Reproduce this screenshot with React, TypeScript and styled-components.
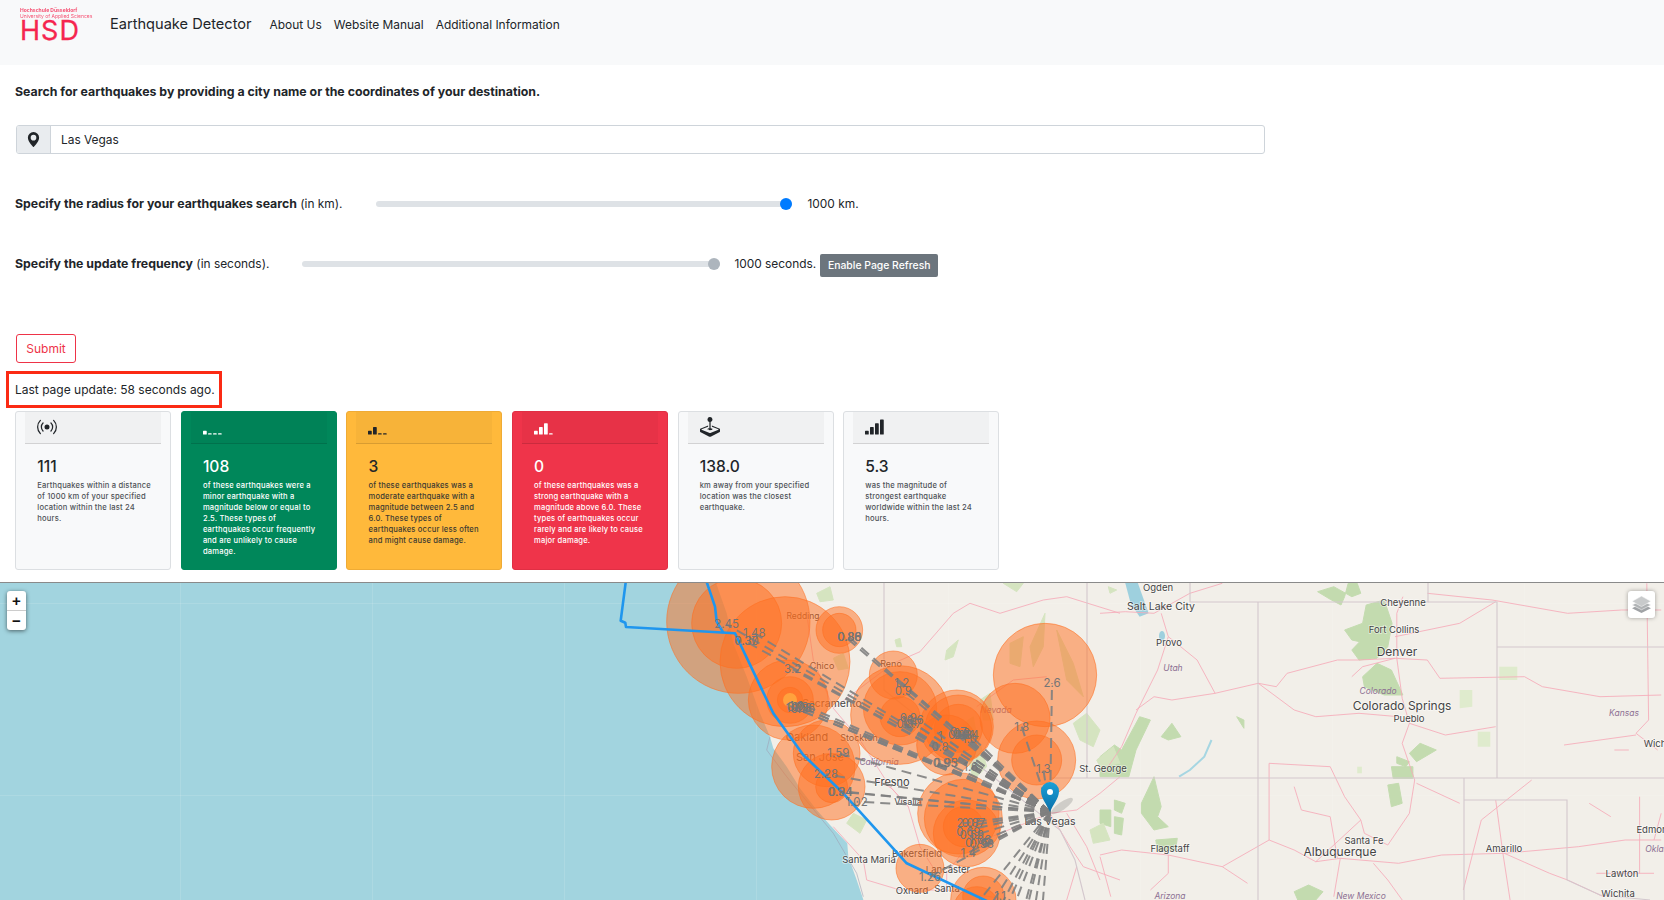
import React from "react";
import styled, { createGlobalStyle } from "styled-components";
import { BsBroadcast, BsGeoAltFill, BsJoystick, BsReception1, BsReception2, BsReception3, BsReception4 } from "react-icons/bs";

const Global = createGlobalStyle`
  html, body { margin: 0; padding: 0; background: #fff; }
  body { font-family: Inter, "Noto Sans", "Liberation Sans", sans-serif; color: #212529; width: 1664px; height: 900px; overflow: hidden; }
`;

const Page = styled.div`display: flex; flex-direction: column; width: 1664px; height: 900px; overflow: hidden;`;
const Nav = styled.nav`display: flex; align-items: flex-start; height: 65px; background: #f8f9fa; flex: none;`;
const Logo = styled.div`display: flex; flex-direction: column; width: 74px; margin: 7px 0 0 20px; color: #f5254f;`;
const LogoSmall = styled.span`font-size: 5px; line-height: 6px; white-space: nowrap; font-weight: ${(p: { $b?: boolean }) => (p.$b ? 700 : 400)}; opacity: .8;`;
const LogoBig = styled.span`font-size: 27px; line-height: 22px; letter-spacing: 1px; font-weight: 400; margin-top: 1px; -webkit-text-stroke: .3px #f5254f;`;
const Brand = styled.span`font-size: 14.6px; line-height: 20px; margin: 14px 0 0 16px; white-space: nowrap;`;
const NavLink = styled.a`font-size: 11.95px; line-height: 18px; margin: 16px 0 0 12px; white-space: nowrap; &:first-of-type { margin-left: 18px; }`;
const Main = styled.main`display: flex; flex-direction: column; padding: 0 0 0 15px; flex: none; height: 517px;`;
const Lead = styled.p`margin: 18px 0 0; font-size: 12.35px; line-height: 18px; font-weight: 700; white-space: nowrap;`;
const InputGroup = styled.div`display: flex; width: 1249px; height: 29px; margin: 24px 0 0 1px; border: 1px solid #ced4da; border-radius: 3px; box-sizing: border-box; overflow: hidden;`;
const Addon = styled.div`display: flex; align-items: center; justify-content: center; width: 33px; background: #e9ecef; border-right: 1px solid #ced4da; font-size: 15px; color: #212529;`;
const InputText = styled.div`padding-left: 10px; font-size: 11.9px; line-height: 27px;`;
const SliderRow = styled.div`display: flex; align-items: center; height: 24px; margin-top: ${(p: { $mt: number }) => p.$mt}px; font-size: 11.9px; white-space: nowrap;`;
const Strong = styled.b`font-weight: 700; font-size: 12.3px;`;
const Track = styled.div<{ $w: number; $ml: number; $mr: number }>`position: relative; height: 6px; border-radius: 3px; background: #dee2e6; flex: none; width: ${p => p.$w}px; margin: 2px ${p => p.$mr}px 0 ${p => p.$ml}px;`;
const Thumb = styled.span`position: absolute; right: 0; top: -3px; width: 12px; height: 12px; border-radius: 50%; background: ${(p: { $c: string }) => p.$c};`;
const GreyButton = styled.button`height: 23px; width: 118px; margin: 5px 0 0 4px; padding: 0; border: 0; border-radius: 2px; background: #6c757d; color: #fff; font: 500 10.4px Inter, sans-serif;`;
const Submit = styled.button`align-self: flex-start; height: 29px; width: 60px; margin: 59px 0 0 1px; padding: 0; background: #fff; border: 1px solid #ee3348; border-radius: 3px; color: #ee3348; font: 400 12px Inter, sans-serif;`;
const Notice = styled.div`box-sizing: border-box; width: 216px; height: 37px; margin: 8px 0 0 -9px; padding-left: 6px; border: 3px solid #fb2a14; font-size: 12px; line-height: 31px; white-space: nowrap;`;
const Cards = styled.div`display: flex; gap: 9.6px; margin: 3px 0 0 .3px;`;
const Card = styled.div<{ $bg: string; $fg: string; $bd: string; $muted: string }>`
  box-sizing: border-box; width: 156px; height: 159px; border: 1px solid ${p => p.$bd}; border-radius: 3px; background: ${p => p.$bg}; color: ${p => p.$fg}; padding: 0 9px;
  p { color: ${p => p.$muted}; }
`;
const CardHead = styled.div`box-sizing: border-box; height: 32px; background: rgba(0,0,0,.03); border-bottom: 1px solid rgba(0,0,0,.125); padding: 5px 0 0 12px; font-size: 20px; line-height: 20px; svg { display: block; }`;
const CardBody = styled.div`padding: 13px 9.6px 0 12px;`;
const CardTitle = styled.h5`margin: 0; font-size: 15.6px; line-height: 19px; font-weight: 500;`;
const CardText = styled.p`margin: 4px 0 0; font-size: 7.6px; line-height: 11px; letter-spacing: .17px; font-weight: 500;`;
const MapWrap = styled.section`position: relative; flex: none; height: 318px; width: 1664px; box-sizing: border-box; border-top: 1px solid #8a8a8a; overflow: hidden; background: #f2efe9;`;
const MapSvg = styled.svg`display: block; width: 1664px; height: 317px;`;
const Tiles = styled.g`filter: blur(.45px);`;
const ZoomBox = styled.div`position: absolute; left: 7px; top: 8px; width: 19px; height: 39px; background: #fff; border-radius: 3px; box-shadow: 0 1px 4px rgba(0,0,0,.55); display: flex; flex-direction: column;`;
const ZoomBtn = styled.div`height: 19.5px; display: flex; align-items: center; justify-content: center; font: 700 15px/1 "Liberation Sans", sans-serif; color: #111; & + & { border-top: 1px solid #ccc; }`;
const LayerBox = styled.div`position: absolute; left: 1628px; top: 8px; width: 27px; height: 27px; background: #fff; border-radius: 3px; box-shadow: 0 0 4px rgba(0,0,0,.35); display: flex; align-items: center; justify-content: center;`;

const z4 = (x: number, y: number) => [600 + x / 3, 580 + y / 3];
const z5 = (x: number, y: number) => [1100 + x / 2.78, 580 + y / 3];
const pl = (f: (x: number, y: number) => number[], a: number[]) => {
  const o: string[] = [];
  for (let i = 0; i < a.length; i += 2) o.push(f(a[i], a[i + 1]).map(v => v.toFixed(1)).join(","));
  return o.join(" ");
};

const coast = [345,0,380,100,400,190,440,290,480,400,510,470,520,505,560,560,600,625,650,690,690,735,742,790,745,830,770,900,792,965];
const seaPts = "0,581 " + pl(z4, coast) + " 0,900";

const roads4: number[][] = [
  [620,100,640,240,700,385,780,480,870,620,925,680,960,800,1010,880],
  [700,385,760,340,880,250,960,215,1060,100,1110,70,1200,100,1330,60,1400,50,1560,100],
  [1350,700,1410,800,1450,860,1560,900],[1350,700,1430,690,1500,640,1560,590],[1430,860,1400,960],
  [700,740,790,840,800,900,900,930,1040,930,1200,955],[1040,880,1100,800,1350,700],
  [925,680,875,625,830,600],[1130,380,1240,300,1340,290],[1400,700,1460,800,1500,900],[1040,930,1040,880],
];
const roads5: number[][] = [
  [0,100,70,95,150,100,250,40,340,10],[910,40,1090,60,1300,100,1450,90,1560,90],
  [100,390,150,350,200,360,320,340,440,310,490,320,520,280,660,240,720,240,820,235,910,240,945,295,1180,290,1230,320,1390,350,1560,345],
  [825,235,825,100,842,50],[825,235,840,355,860,430,840,490,875,600,860,700,800,795,735,760,725,720],
  [0,825,60,810,190,825,340,860,470,780,540,810,600,845,668,835,830,850,950,825,1124,820,1330,800,1460,780,1560,780],
  [170,100,190,170,270,240,320,340],[190,170,160,270,100,400,60,500,10,580],[1100,660,1120,820,1140,960],
  [820,170,1000,130,1100,65],[860,430,960,465,1100,440],[1290,495,1490,465],[1520,10,1525,420,1490,460,1550,510],
  [470,550,640,560,680,650,725,720,600,845],[470,550,470,780],[540,620,560,690,640,710,660,835],[1010,930,1060,720,1200,600],
  [1124,820,1250,880,1300,900,1400,950],[190,825,190,880,140,930],[1500,650,1500,880],[1540,780,1560,700],
  [440,310,540,390,600,410,720,400,830,410],[700,290,730,260,820,235],[668,835,650,950],[760,850,800,900,840,960],
  [0,830,30,950],[340,860,410,910],[1360,670,1420,710],[1380,880,1540,880],[880,610,1000,670],[1430,510,1470,510],
];
const greens5: number[][] = [
  [605,35,650,20,700,50,725,40,715,10,690,10,680,50,670,75,640,58],
  [680,150,730,130,740,75,790,60,812,130,800,200,770,235,720,240,700,210,722,185,700,180],
  [730,290,770,250,810,270,842,345,790,345,735,320],
  [860,520,890,490,935,510,880,545],[825,530,860,545,850,560,825,550],[810,560,870,560,870,595,815,595],
  [0,530,40,495,60,510,110,410,140,420,100,510,80,590,0,590],[170,470,200,430,225,470,190,480],[380,410,400,420,400,445],
  [115,670,150,590,170,680,160,710,190,740,150,750,115,700],[800,615,830,610,840,670,810,680],[155,780,215,775,210,810,160,815],
  [0,690,30,690,30,740,0,730],[40,660,70,670,60,700,40,690],[40,710,65,715,60,765,40,760],[540,935,580,915,620,935,600,960,550,960],
];
const paleGreens5: number[][] = [
  [1050,455,1085,455,1085,500,1050,500],[1000,330,1035,330,1035,380,1000,385],[715,560,728,560,728,580,715,580],[1110,260,1160,260,1160,300,1110,300],
];
const greens4: number[][] = [
  [650,40,690,20,700,60,660,65],[700,235,730,220,745,265,715,270],[1040,210,1075,180,1060,230,1035,240],[885,180,900,175,905,200,890,200],
  [1420,430,1460,400,1500,450,1480,500,1440,480],[1490,540,1540,500,1560,550,1500,560],[1470,750,1510,730,1530,780,1480,790],
  [760,700,800,720,780,760,740,730],[1100,520,1140,490,1160,560,1120,600],
  [1290,200,1335,100,1330,200,1300,260],[1370,150,1420,250,1450,350,1400,300],[1230,190,1270,170,1260,260,1230,250],
  [1140,360,1170,340,1180,420,1150,420],[1090,430,1120,410,1130,470,1100,480],[1210,10,1270,10,1250,35],[1525,20,1550,30,1530,40],
];
const circles: number[][] = [
  [415,125,215],[410,130,135],[555,245,195],[565,360,120],[570,360,70],[570,360,38],[718,150,70],[718,150,50],
  [880,285,72],[900,405,148],[900,385,110],[900,410,60],[1070,440,110],[1075,445,100],[1075,445,72],[1040,495,90],
  [1335,285,155],[1245,415,105],[1310,540,117],[1310,540,75],[640,560,125],[680,520,100],[695,620,100],[695,620,48],
  [1075,700,122],[1090,715,117],[1100,760,100],[1090,740,60],[960,865,72],[1150,960,98],[1150,950,62],[1130,990,70],
];
const tip = [1050, 812];
const clusterTargets: number[][] = [
  [600,380],[585,385],[570,378],[620,390],[610,375],[905,430],[925,420],[940,430],[915,440],[950,415],
  [1075,460],[1095,470],[1110,465],[1085,455],[1115,485],[1105,750],[1110,770],[1130,790],[1090,730],[1150,795],[1120,735],
  [380,133],[463,160],[430,180],[578,268],[748,172],[735,170],[905,308],[910,332],[1356,310],[1265,440],[1330,568],
  [715,520],[678,583],[720,635],[735,635],[770,665],[1105,818],[990,890],[1020,500],[1035,548],[1112,560],[1020,465],
  [1010,548],[1185,1010],[1150,1010],[1230,1010],[1265,1010],[1300,1010],[1325,1010],[1205,1010],[1275,1010],[1100,1010],
];
const numbers: [string, number, number][] = [
  ["2.45",380,133],["1.48",463,160],["0.30",440,182],["0.37",438,182],["3.2",578,268],["0.88",748,172],["0.86",748,172],["0.80",749,171],
  ["1.2",905,308],["0.9",910,332],["2.6",1356,310],["1.8",1265,440],["1.3",1330,568],["1.59",715,520],["2.28",678,583],["0.94",720,635],["0.84",722,635],
  ["1.02",770,665],["1.4",1105,818],["1.26",990,890],["1",1020,467],["0.8",1020,500],["0.95",1035,548],["0.93",1038,548],["1.6",1112,560],
  ["0.88",1080,465],["0.81",1090,466],["0.94",1100,466],["1.1",1200,948],
  ["0.7",585,380],["0.9",600,382],["1.1",575,385],["0.8",610,383],["1.0",590,378],["0.6",620,384],["0.5",598,388],
  ["0.9",925,415],["1.4",930,425],["0.8",915,432],["0.6",945,420],["1.1",920,422],["0.7",940,432],
  ["0.7",1075,455],["0.8",1085,460],["1.0",1108,478],
  ["2.07",1105,730],["0.87",1120,730],["0.69",1105,755],["0.59",1115,765],["1.06",1140,780],["0.98",1145,793],["0.76",1130,790],
];
type L = [string, number, number, number?, boolean?];
const labels: L[] = [
  ["Ogden",1158,587,9.5],["Salt Lake City",1161,606,10.5],["Provo",1169,642,9.5],["Utah",1173,667,8.5,true],["Cheyenne",1403,602,9.5],["Fort Collins",1394,629,9.5],
  ["Denver",1397,652,12],["Colorado",1378,690,8.5,true],["Colorado Springs",1402,706,12],["Pueblo",1409,718,9.5],["Kansas",1624,712,8.5,true],["Wich",1655,743,9.5],
  ["St. George",1103,768,9.5],["Flagstaff",1170,848,9.5],["Santa Fe",1364,840,9.5],["Albuquerque",1340,852,12],["Amarillo",1504,848,9.5],["Edmon",1652,829,9.5],
  ["Oklah",1657,848,8.5,true],["Lawton",1622,873,9.5],["Wichita",1618,893,9.5],["Arizona",1170,895,8.5,true],["New Mexico",1361,895,8.5,true],
  ["Redding",803,615,8.5],["Chico",822,665,9],["Reno",891,663,9],["Sacramento",832,703,10.5],["Oakland",807,737,11],["Stockton",859,737,9],["San Jose",820,757,11],
  ["California",879,761,8.5,true],["Fresno",892,782,11],["Visalia",908,801,9],["Santa Maria",869,859,9.5],["Bakersfield",917,853,9.5],["Lancaster",948,869,9.5],
  ["Oxnard",912,890,9.5],["Santa",947,888,9.5],["Nevada",996,709,8.5,true],["Las Vegas",1050,821,10.5],
];
const gridX = Array.from({ length: 9 }, (_, i) => 180.5 + i * 192);

const MapArt = () => (
  <MapSvg viewBox="0 583 1664 317">
    <Tiles>
      <polygon points={seaPts} fill="#a2d4df" />
      {gridX.map(x => <line key={x} x1={x} x2={x} y1={581} y2={900} stroke="#fff" strokeOpacity=".12" />)}
      <line x1={0} x2={1664} y1={603.5} y2={603.5} stroke="#fff" strokeOpacity=".12" />
      <line x1={0} x2={1664} y1={795.5} y2={795.5} stroke="#fff" strokeOpacity=".12" />
      <polyline points={pl(z4, [510,470,500,510,560,590,650,700,700,760,770,880,790,950])} fill="none" stroke="#9fa0b4" strokeOpacity=".6" />
      {greens5.map((g, i) => <polygon key={i} points={pl(z5, g)} fill="#c3dbaf" stroke="#c3dbaf" strokeLinejoin="round" />)}
      {paleGreens5.map((g, i) => <polygon key={i} points={pl(z5, g)} fill="#dfebcd" />)}
      {greens4.map((g, i) => <polygon key={i} points={pl(z4, g)} fill="#d5e4c0" stroke="#d5e4c0" strokeLinejoin="round" />)}
      <polygon points={pl(z5, [70,8,105,8,135,100,110,110,85,70])} fill="#9ed0de" />
      <ellipse cx={1162} cy={636} rx={3} ry={5} fill="#9ed0de" />
      <polyline points={pl(z5, [220,590,250,570,290,530,310,480])} fill="none" stroke="#a6d6e2" strokeWidth={2} />
      <g fill="none" stroke="#f6aab9" strokeWidth={1} strokeOpacity=".85">
        {roads5.map((r, i) => <polyline key={i} points={pl(z5, r)} />)}
        {roads4.map((r, i) => <polyline key={i} points={pl(z4, r)} />)}
      </g>
      <g fill="none" stroke="#d3c7cd" strokeWidth={1.1}>
        <polyline points="1190,583 1190,602 1258,602 1428,602 1428,583" />
        <polyline points="1428,602 1497,602 1497,778" />
        <line x1={1258} y1={602} x2={1258} y2={900} />
        <line x1={1050} y1={778} x2={1664} y2={778} />
        <line x1={1497} y1={647} x2={1664} y2={647} />
        <polyline points="1464,778 1464,900" />
        <polyline points="1464,800 1567,800 1567,880 1600,895 1650,900" />
        <line x1={1087} y1={582} x2={1087} y2={778} />
        <polyline points="884,582 884,690 1060,830 1075,860 1085,900" />
      </g>
    </Tiles>
    <g fontFamily="Inter, 'Noto Sans', sans-serif" textAnchor="middle">
      {labels.map(([t, x, y, s, it]) => (
        <text key={t + x} x={x} y={y + 3.5} fontSize={s ?? 10} fontStyle={it ? "italic" : "normal"} fill={it ? "#8d6f93" : "#444"} stroke="#fff" strokeOpacity={it ? 0 : .55} strokeWidth={1.6} paintOrder="stroke">{t}</text>
      ))}
    </g>
    <g>
      {circles.map(([x, y, r], i) => {
        const [cx, cy] = z4(x, y);
        return <circle key={i} cx={cx} cy={cy} r={r / 3} fill="#ff7020" fillOpacity=".5" stroke="#ff7020" strokeOpacity=".55" />;
      })}
    </g>
    <circle cx={790} cy={700} r={7} fill="#ffc04a" opacity=".6" />
    <g stroke="#1f96ee" strokeWidth={2.6} fill="none" strokeLinejoin="round">
      <polyline points={pl(z4, [78,0,62,122,76,128,78,141,405,160,520,400,610,525,730,640,920,850,1165,965])} />
      <polyline points={pl(z4, [318,0,345,80,350,125,370,158])} />
    </g>
    <g stroke="#7f7f7f" strokeWidth={2} strokeDasharray="10 6" strokeOpacity=".9">
      {clusterTargets.map(([x, y], i) => {
        const [a, b] = z4(x, y);
        return <line key={i} x1={tip[0]} y1={tip[1]} x2={a} y2={b} />;
      })}
    </g>
    <g fontFamily="Inter, 'Noto Sans', sans-serif" fontSize={11.5} fill="#757575" textAnchor="middle">
      {numbers.map(([t, x, y], i) => {
        const [a, b] = z4(x, y);
        return <text key={i} x={a} y={b + 4}>{t}</text>;
      })}
    </g>
    <Tiles><ellipse cx={1062} cy={806} rx={13} ry={4} fill="#000" opacity=".14" transform="rotate(-35 1062 806)" /></Tiles>
    <defs>
      <linearGradient id="pin" x1="0" x2="0" y1="0" y2="1">
        <stop offset="0" stopColor="#1ba0d8" />
        <stop offset="1" stopColor="#0a6fa8" />
      </linearGradient>
    </defs>
    <path d="M1050 812 C1047 804 1041 799 1041 791 A9 9 0 0 1 1059 791 C1059 799 1053 804 1050 812Z" fill="url(#pin)" />
    <circle cx={1050} cy={792} r={3} fill="#fff" />
  </MapSvg>
);

const cards = [
  { bg: "#f8f9fa", fg: "#212529", bd: "#dcdfe2", muted: "#4e5257", icon: <BsBroadcast />, title: "111", text: "Earthquakes within a distance of 1000 km of your specified location within the last 24 hours." },
  { bg: "#00875a", fg: "#fff", bd: "#00875a", muted: "#fff", icon: <BsReception1 />, title: "108", text: "of these earthquakes were a minor earthquake with a magnitude below or equal to 2.5. These types of earthquakes occur frequently and are unlikely to cause damage." },
  { bg: "#ffb93b", fg: "#212529", bd: "#efab35", muted: "#3c3a32", icon: <BsReception2 />, title: "3", text: "of these earthquakes was a moderate earthquake with a magnitude between 2.5 and 6.0. These types of earthquakes occur less often and might cause damage." },
  { bg: "#ef344a", fg: "#fff", bd: "#e02f44", muted: "#fff", icon: <BsReception3 />, title: "0", text: "of these earthquakes was a strong earthquake with a magnitude above 6.0. These types of earthquakes occur rarely and are likely to cause major damage." },
  { bg: "#f8f9fa", fg: "#212529", bd: "#dcdfe2", muted: "#4e5257", icon: <BsJoystick />, title: "138.0", text: "km away from your specified location was the closest earthquake." },
  { bg: "#f8f9fa", fg: "#212529", bd: "#dcdfe2", muted: "#4e5257", icon: <BsReception4 />, title: "5.3", text: "was the magnitude of strongest earthquake worldwide within the last 24 hours." },
];

export default function App() {
  return (
    <Page>
      <Global />
      <Nav>
        <Logo>
          <LogoSmall $b>Hochschule Düsseldorf</LogoSmall>
          <LogoSmall>University of Applied Sciences</LogoSmall>
          <LogoBig>HSD</LogoBig>
        </Logo>
        <Brand>Earthquake Detector</Brand>
        <NavLink>About Us</NavLink>
        <NavLink>Website Manual</NavLink>
        <NavLink>Additional Information</NavLink>
      </Nav>
      <Main>
        <Lead>Search for earthquakes by providing a city name or the coordinates of your destination.</Lead>
        <InputGroup>
          <Addon><BsGeoAltFill /></Addon>
          <InputText>Las Vegas</InputText>
        </InputGroup>
        <SliderRow $mt={37}>
          <span><Strong>Specify the radius for your earthquakes search</Strong> (in km).</span>
          <Track $w={416} $ml={33} $mr={16}><Thumb $c="#007bff" /></Track>
          <span>1000 km.</span>
        </SliderRow>
        <SliderRow $mt={36}>
          <span><Strong>Specify the update frequency</Strong> (in seconds).</span>
          <Track $w={418} $ml={33} $mr={14}><Thumb $c="#adb5bd" /></Track>
          <span>1000 seconds.</span>
          <GreyButton>Enable Page Refresh</GreyButton>
        </SliderRow>
        <Submit>Submit</Submit>
        <Notice>Last page update: 58 seconds ago.</Notice>
        <Cards>
          {cards.map(c => (
            <Card key={c.title} $bg={c.bg} $fg={c.fg} $bd={c.bd} $muted={c.muted}>
              <CardHead>{c.icon}</CardHead>
              <CardBody>
                <CardTitle>{c.title}</CardTitle>
                <CardText>{c.text}</CardText>
              </CardBody>
            </Card>
          ))}
        </Cards>
      </Main>
      <MapWrap>
        <MapArt />
        <ZoomBox><ZoomBtn>+</ZoomBtn><ZoomBtn>−</ZoomBtn></ZoomBox>
        <LayerBox>
          <svg width="23" height="21" viewBox="0 0 20 20">
            <path d="M10 9 L19 13.5 L10 18 L1 13.5Z" fill="#9fa2a5" />
            <path d="M10 6 L19 10.5 L10 15 L1 10.5Z" fill="#b0b3b5" stroke="#fff" strokeWidth=".5" />
            <path d="M10 2 L19 7 L10 12 L1 7Z" fill="#c8cacb" stroke="#fff" strokeWidth=".5" />
          </svg>
        </LayerBox>
      </MapWrap>
    </Page>
  );
}
